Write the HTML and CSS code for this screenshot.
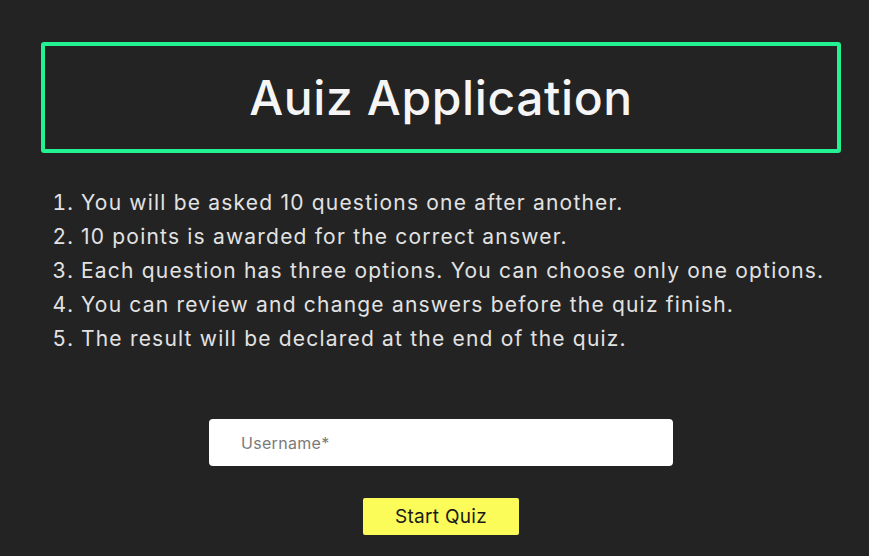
FILE: index.html
```html
<!DOCTYPE html>
<html lang="en">
<head>
<meta charset="utf-8">
<title>Quiz Application</title>
<link rel="stylesheet" href="styles.css">
</head>
<body>
<main class="app">
  <header class="title-box">
    <h1 class="title">Auiz Application</h1>
  </header>
  <ol class="rules">
    <li>You will be asked 10 questions one after another.</li>
    <li>10 points is awarded for the correct answer.</li>
    <li>Each question has three options. You can choose only one options.</li>
    <li>You can review and change answers before the quiz finish.</li>
    <li>The result will be declared at the end of the quiz.</li>
  </ol>
  <form class="start-form">
    <input class="username" type="text" placeholder="Username*">
    <button class="start-btn" type="button">Start Quiz</button>
  </form>
</main>
</body>
</html>
```

FILE: styles.css
```css
html, body {
  margin: 0;
  padding: 0;
  background: #232323;
  height: 100%;
}
body {
  font-family: Inter, "Open Sans", sans-serif;
  color: #e6e6e6;
}
.app {
  width: 800px;
  margin-left: 41px;
  padding-top: 42px;
}
.title-box {
  box-sizing: border-box;
  height: 111px;
  border: 4px solid #23f293;
  border-radius: 3px;
  display: flex;
  align-items: center;
  justify-content: center;
}
.title {
  margin: 0;
  font-size: 48px;
  font-weight: 500;
  letter-spacing: 0.6px;
  color: #f5f5f5;
}
.rules {
  margin: 33px 0 0 0;
  padding-left: 40px;
  font-size: 21px;
  line-height: 34px;
  letter-spacing: 1.2px;
  color: #e2e2e2;
}
.start-form {
  margin-top: 63px;
  display: flex;
  flex-direction: column;
  align-items: center;
}
.username {
  box-sizing: border-box;
  width: 464px;
  height: 47px;
  border: none;
  border-radius: 4px;
  background: #fff;
  padding: 0 0 0 32px;
  font-family: inherit;
  font-size: 16px;
  letter-spacing: 0.3px;
  color: #333;
  outline: none;
}
.username::placeholder {
  color: #7a7a7a;
}
.start-btn {
  margin-top: 32px;
  width: 156px;
  height: 37px;
  border: none;
  border-radius: 2px;
  background: #fbfc5a;
  color: #1a1a1a;
  font-family: inherit;
  font-size: 19px;
  letter-spacing: 0.3px;
  cursor: pointer;
}
```
